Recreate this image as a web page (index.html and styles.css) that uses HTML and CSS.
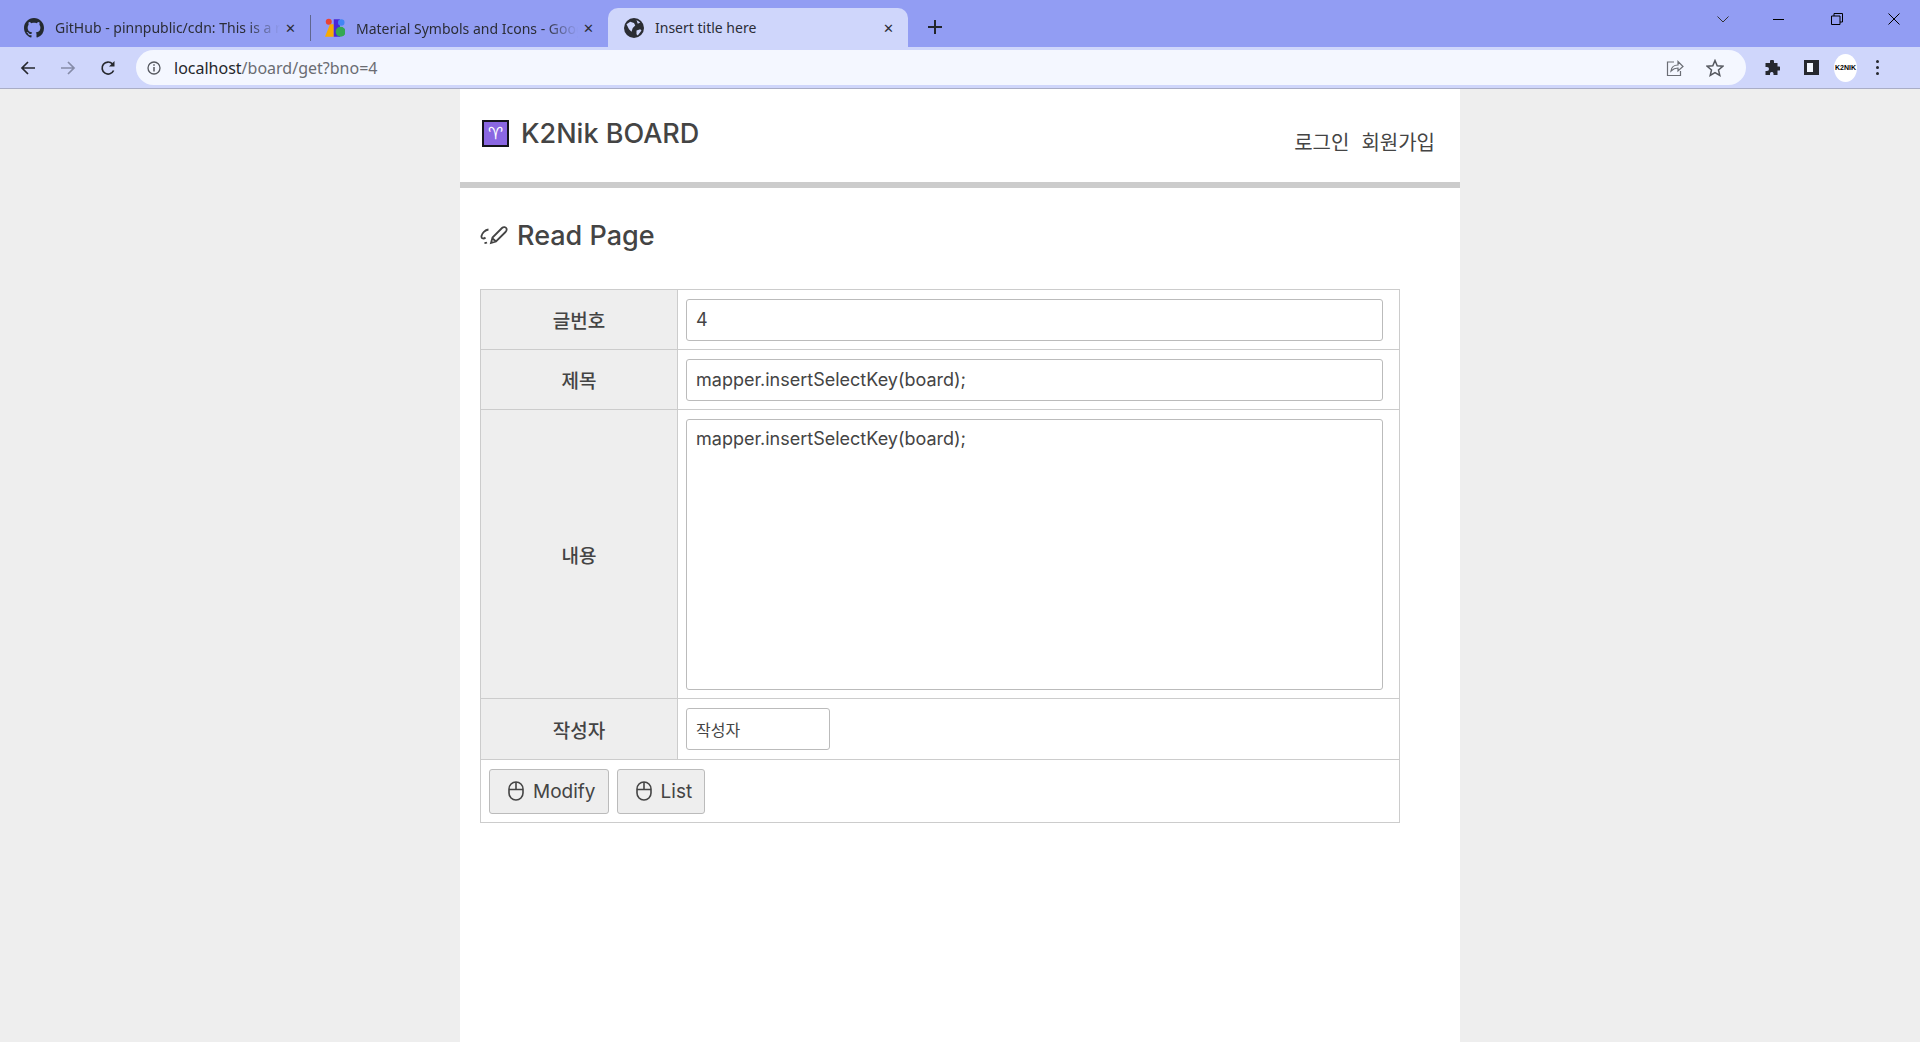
FILE: index.html
```html
<!DOCTYPE html>
<html lang="ko">

<head>
    <meta charset="UTF-8">
    <meta name="viewport" content="width=device-width, initial-scale=1.0">
    <title>Insert title here</title>
    <link rel="stylesheet" href="styles.css">
</head>

<body>
    <div class="tabbar">
        <div class="tab">
            <svg class="favicon" viewBox="0 0 16 16"><path fill="#24292f" d="M8 0C3.58 0 0 3.58 0 8c0 3.54 2.29 6.53 5.47 7.59.4.07.55-.17.55-.38 0-.19-.01-.82-.01-1.49-2.01.37-2.53-.49-2.69-.94-.09-.23-.48-.94-.82-1.13-.28-.15-.68-.52-.01-.53.63-.01 1.08.58 1.23.82.72 1.21 1.87.87 2.33.66.07-.52.28-.87.51-1.07-1.78-.2-3.64-.89-3.64-3.95 0-.87.31-1.59.82-2.15-.08-.2-.36-1.02.08-2.12 0 0 .67-.21 2.2.82.64-.18 1.32-.27 2-.27s1.36.09 2 .27c1.53-1.04 2.2-.82 2.2-.82.44 1.1.16 1.92.08 2.12.51.56.82 1.27.82 2.15 0 3.07-1.87 3.75-3.65 3.95.29.25.54.73.54 1.48 0 1.07-.01 1.93-.01 2.2 0 .21.15.46.55.38A8.01 8.01 0 0 0 16 8c0-4.42-3.58-8-8-8z"/></svg>
            <span class="tab-title">GitHub - pinnpublic/cdn: This is a repository</span>
            <span class="tab-close">&#10005;</span>
        </div>
        <div class="tab tab-second">
            <svg class="favicon" viewBox="0 0 16 16">
                <path fill="#f9ab00" d="M0 15 4 5l3 0 0 10z"/>
                <circle cx="3" cy="3" r="2.4" fill="#ea4335"/>
                <rect x="7" y="1" width="5" height="14" fill="#4a27d8"/>
                <circle cx="13" cy="3.5" r="2.6" fill="#4285f4"/>
                <circle cx="12.5" cy="11" r="4" fill="#34a853"/>
            </svg>
            <span class="tab-title">Material Symbols and Icons - Google Fonts</span>
            <span class="tab-close">&#10005;</span>
        </div>
        <div class="tab tab-active">
            <svg class="favicon" viewBox="0 0 16 16">
                <circle cx="8" cy="8" r="8" fill="#2b2d33"/>
                <path fill="#d0d7fb" d="M2 5l3-2 3 1 1 2-2 2-1 3-2-2zM10 10l3-1 1 1-3 4-1-1zM10 1.500l3 2-2 1z"/>
            </svg>
            <span class="tab-title">Insert title here</span>
            <span class="tab-close">&#10005;</span>
        </div>
        <svg class="newtab" viewBox="0 0 14 14"><path d="M7 0v14M0 7h14" stroke="#22252b" stroke-width="2" fill="none"/></svg>
        <div class="window-btns">
            <svg class="win-chevron" viewBox="0 0 12 7"><path d="M.5.5 6 6 11.500.5" fill="none" stroke="#333"/></svg>
            <svg class="win-min" viewBox="0 0 11 1"><path d="M0 .5h11" stroke="#000"/></svg>
            <svg class="win-max" viewBox="0 0 12 12"><path d="M.5 3h8.500v8.500H.5zM3 3V.5h8.500V9H9" fill="none" stroke="#000"/></svg>
            <svg class="win-close" viewBox="0 0 12 12"><path d="M.5.500l11 11M11.500.500l-11 11" stroke="#000"/></svg>
        </div>
    </div>

    <div class="toolbar">
        <svg class="nav-icon" viewBox="0 0 16 16"><path d="M15 8H2M8 2 2 8l6 6" fill="none" stroke="#26282e" stroke-width="1.700"/></svg>
        <svg class="nav-icon" viewBox="0 0 16 16"><path d="M1 8h13M8 2l6 6-6 6" fill="none" stroke="#868ca8" stroke-width="1.700"/></svg>
        <svg class="nav-icon" viewBox="0 0 16 16"><path d="M13.600 10.500A6 6 0 1 1 12.400 3.800" fill="none" stroke="#26282e" stroke-width="1.700"/><path d="M14.500 1v5.500H9z" fill="#26282e"/></svg>
        <div class="omnibox">
            <svg class="info-icon" viewBox="0 0 14 14"><circle cx="7" cy="7" r="6" fill="none" stroke="#55585f" stroke-width="1.300"/><path d="M7 6v4.500M7 3.300v1.500" stroke="#55585f" stroke-width="1.500"/></svg>
            <span class="url"><span class="url-host">localhost</span>/board/get?bno=4</span>
            <svg class="omni-share" viewBox="0 0 18 18"><path d="M8 3H1.500v13.500h13V12" fill="none" stroke="#6b6e75" stroke-width="1.200"/><path d="M5 12c.5-4 3.500-6 7-6V2.500l5 5-5 4.500V9c-3 0-5 1-7 3z" fill="#f4f7ff" stroke="#6b6e75" stroke-width="1.200"/></svg>
            <svg class="omni-star" viewBox="0 0 18 18"><path d="M9 1.500l2.200 5.200 5.600.5-4.300 3.700 1.300 5.500L9 13.600l-4.800 2.800 1.300-5.500L1.200 7.200l5.600-.5z" fill="none" stroke="#55585f" stroke-width="1.500"/></svg>
        </div>
        <svg class="ext-icon" viewBox="0 0 16 16"><path fill="#26282e" d="M6 1.500a2 2 0 0 1 4 0V3h3.500v3.500H15a2 2 0 0 1 0 4h-1.500V15H9.500v-1.500a1.800 1.800 0 0 0-3.500 0V15H1.500v-4H3a2 2 0 0 0 0-4H1.500V3H6z"/></svg>
        <div class="side-icon"></div>
        <div class="avatar">K2NIK</div>
        <div class="menu-dots"><i></i><i></i><i></i></div>
    </div>

    <div class="page">
        <div class="wrap">
            <header class="site-head">
                <h1 class="logo"><span class="logo-mark">&#9800;&#xFE0E;</span>K2Nik BOARD</h1>
                <nav class="site-nav"><a>로그인</a><a>회원가입</a></nav>
            </header>

            <main class="content">
                <h2 class="page-title">
                    <svg class="pen-icon" viewBox="0 0 28 20"><path d="M8.500 4.500C5 5 2 8 1.500 11c-.5 3 2.500 3 4 1.500M11 18l1.500-5.500L22 3c1.500-1.500 4-1 4.500.5s0 2.500-1 3.500L16 16.500zM12 13l4 3.500" fill="none" stroke="#444" stroke-width="1.800"/><path d="M7 17.500c-1 .5-1.500.5-2.500.5" fill="none" stroke="#444" stroke-width="1.800"/></svg>
                    Read Page
                </h2>
                <table class="board-table">
                    <tr class="row-num">
                        <th>글번호</th>
                        <td><input class="field" type="text" value="4"></td>
                    </tr>
                    <tr class="row-title">
                        <th>제목</th>
                        <td><input class="field" type="text" value="mapper.insertSelectKey(board);"></td>
                    </tr>
                    <tr class="row-body">
                        <th>내용</th>
                        <td><textarea class="field field-area">mapper.insertSelectKey(board);</textarea></td>
                    </tr>
                    <tr class="row-writer">
                        <th>작성자</th>
                        <td><input class="field field-writer" type="text" value="작성자"></td>
                    </tr>
                    <tr class="row-btns">
                        <td colspan="2">
                            <button class="btn">
                                <svg class="mouse-icon" viewBox="0 0 16 20"><rect x="1" y="1" width="14" height="18" rx="7" fill="none" stroke="#444" stroke-width="1.600"/><path d="M1 8.500h14M8 1v7.500" fill="none" stroke="#444" stroke-width="1.600"/></svg>
                                Modify
                            </button>
                            <button class="btn">
                                <svg class="mouse-icon" viewBox="0 0 16 20"><rect x="1" y="1" width="14" height="18" rx="7" fill="none" stroke="#444" stroke-width="1.600"/><path d="M1 8.500h14M8 1v7.500" fill="none" stroke="#444" stroke-width="1.600"/></svg>
                                List
                            </button>
                        </td>
                    </tr>
                </table>
            </main>
        </div>
    </div>
</body>

</html>
```

FILE: styles.css
```css
* {
    box-sizing: border-box;
}

html,
body {
    height: 100%;
}

body {
    margin: 0;
    display: flex;
    flex-direction: column;
    overflow: hidden;
    background-color: #eee;
    color: #444;
    font-family: Inter, "Noto Sans CJK KR", sans-serif;
}

/* browser tabs */
.tabbar {
    display: flex;
    align-items: flex-end;
    height: 47px;
    flex: none;
    padding-left: 8px;
    background-color: #929df3;
}

.tab {
    display: flex;
    align-items: center;
    width: 302px;
    height: 39px;
    padding: 0 10px 0 16px;
    color: #2b2d36;
    font-family: "Noto Sans", "Noto Sans CJK KR", sans-serif;
    font-size: 14px;
}

.tab-second {
    width: 298px;
    padding-left: 14px;
    border-left: 1px solid #5f668f;
    height: 26px;
    margin-bottom: 6px;
}

.tab-active {
    width: 300px;
    padding-left: 16px;
    background-color: #cfd6fb;
    border-radius: 10px 10px 0 0;
}

.favicon {
    width: 20px;
    height: 20px;
    flex: none;
    margin-right: 11px;
}

.tab-title {
    flex: 1;
    overflow: hidden;
    white-space: nowrap;
    -webkit-mask-image: linear-gradient(to right, #000 85%, transparent 100%);
    mask-image: linear-gradient(to right, #000 85%, transparent 100%);
}

.tab-active .tab-title {
    -webkit-mask-image: none;
    mask-image: none;
}

.tab-close {
    width: 20px;
    flex: none;
    text-align: center;
    font-size: 13px;
}

.newtab {
    width: 14px;
    height: 14px;
    margin: 0 0 13px 20px;
}

.window-btns {
    display: flex;
    align-items: center;
    margin-left: auto;
    height: 38px;
    align-self: flex-start;
    padding-right: 20px;
}

.win-chevron {
    width: 12px;
    height: 7px;
    margin-right: 44px;
}

.win-min {
    width: 11px;
    height: 1px;
    margin-right: 47px;
}

.win-max {
    width: 12px;
    height: 12px;
    margin-right: 45px;
}

.win-close {
    width: 12px;
    height: 12px;
}

/* address bar */
.toolbar {
    display: flex;
    align-items: center;
    height: 42px;
    flex: none;
    padding: 0 20px;
    background-color: #cfd6fb;
    border-bottom: 1px solid #a9adc6;
}

.nav-icon {
    width: 16px;
    height: 16px;
    margin-right: 24px;
}

.omnibox {
    display: flex;
    align-items: center;
    width: 1610px;
    height: 35px;
    margin-left: -4px;
    padding: 0 11px;
    background-color: #f4f7ff;
    border-radius: 18px;
}

.info-icon {
    width: 14px;
    height: 14px;
    margin-right: 13px;
}

.url {
    flex: 1;
    color: #6a6c72;
    font-family: "Noto Sans", sans-serif;
    font-size: 16px;
}

.url-host {
    color: #25272c;
}

.omni-share {
    width: 18px;
    height: 18px;
    margin-right: 22px;
}

.omni-star {
    width: 18px;
    height: 18px;
    margin-right: 11px;
}

.ext-icon {
    width: 16px;
    height: 16px;
    margin-left: 18px;
}

.side-icon {
    width: 15px;
    height: 15px;
    margin-left: 24px;
    background-color: #f4f7ff;
    border: 3px solid #26282e;
    border-right-width: 6px;
}

.avatar {
    width: 23px;
    height: 28px;
    margin-left: 15px;
    background-color: #fff;
    border-radius: 50%;
    color: #000;
    font-family: "Liberation Sans", sans-serif;
    font-size: 7px;
    font-weight: 700;
    line-height: 28px;
    text-align: center;
    white-space: nowrap;
}

.menu-dots {
    display: flex;
    flex-direction: column;
    gap: 3px;
    margin-left: 19px;
}

.menu-dots i {
    display: block;
    width: 3px;
    height: 3px;
    border-radius: 50%;
    background-color: #26282e;
}

/* page */
.page {
    flex: 1;
    min-height: 0;
}

.wrap {
    width: 1000px;
    height: 100%;
    margin: 0 auto;
    background-color: white;
}

.site-head {
    display: flex;
    justify-content: space-between;
    height: 99px;
    padding: 0 25px 0 22px;
    border-bottom: 6px solid #ccc;
}

.logo {
    display: flex;
    align-items: center;
    height: 28px;
    margin: 30px 0 0;
    font-size: 27px;
    font-weight: 500;
}

.logo-mark {
    width: 27px;
    height: 27px;
    margin-right: 12px;
    background-color: #8a67e2;
    border: 1px solid #14141c;
    box-shadow: inset 0 0 0 1px #14141c;
    color: #fff;
    font-family: "DejaVu Sans", sans-serif;
    font-size: 17px;
    font-weight: 400;
    line-height: 25px;
    text-align: center;
}

.site-nav {
    display: flex;
    gap: 12px;
    margin-top: 40px;
    font-size: 20px;
    line-height: 28px;
}

.content {
    padding: 0 20px;
}

.page-title {
    display: flex;
    align-items: center;
    height: 34px;
    margin: 30px 0 0;
    font-size: 27px;
    font-weight: 500;
}

.pen-icon {
    width: 28px;
    height: 20px;
    margin-right: 9px;
}

.board-table {
    width: 920px;
    margin-top: 37px;
    border-collapse: collapse;
    font-size: 18px;
}

.board-table th,
.board-table td {
    padding: 0 8px;
    border: 1px solid #ccc;
    vertical-align: middle;
}

.board-table th {
    width: 197px;
    background-color: #eee;
    font-size: 19px;
    font-weight: 500;
    text-align: center;
}

.row-num,
.row-title {
    height: 60px;
}

.row-body {
    height: 289px;
}

.row-writer {
    height: 61px;
}

.row-btns {
    height: 63px;
}

.field {
    display: block;
    width: 697px;
    height: 42px;
    padding: 0 9px;
    background-color: white;
    border: 1px solid #bbb;
    border-radius: 3px;
    color: #444;
    font-family: inherit;
    font-size: 18px;
}

.field-area {
    height: 271px;
    padding: 8px 9px;
    resize: none;
}

.field-writer {
    width: 144px;
    font-size: 16px;
}

.btn {
    display: inline-flex;
    align-items: center;
    height: 45px;
    margin-right: 3px;
    padding: 0 12px 0 18px;
    background-color: #eee;
    border: 1px solid #bbb;
    border-radius: 3px;
    color: #444;
    font-family: inherit;
    font-size: 19px;
}

.mouse-icon {
    width: 16px;
    height: 20px;
    margin-right: 9px;
}
```
